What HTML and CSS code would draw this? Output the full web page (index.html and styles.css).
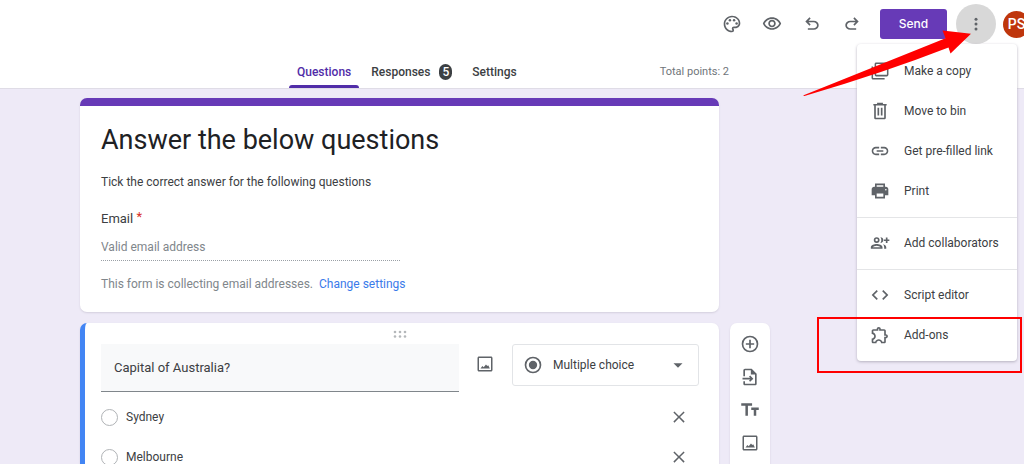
FILE: index.html
```
<!DOCTYPE html>
<html lang="en">
<head>
<meta charset="utf-8">
<title>Answer the below questions</title>
<link rel="stylesheet" href="styles.css">
</head>
<body>
<header class="header">
  <div class="actions">
    <button class="icon-btn" aria-label="Customise theme"><svg class="icon" viewBox="0 0 24 24"><path d="M12 22C6.49 22 2 17.51 2 12S6.49 2 12 2s10 4.04 10 9c0 3.31-2.69 6-6 6h-1.77c-.28 0-.5.22-.5.5 0 .12.05.23.13.33.41.47.64 1.06.64 1.67A2.5 2.5 0 0 1 12 22zm0-18c-4.41 0-8 3.59-8 8s3.59 8 8 8c.28 0 .5-.22.5-.5a.54.54 0 0 0-.14-.35c-.41-.46-.63-1.05-.63-1.65a2.5 2.5 0 0 1 2.5-2.5H16c2.21 0 4-1.79 4-4 0-3.86-3.59-7-8-7z"/><circle cx="6.5" cy="11.5" r="1.5"/><circle cx="9.5" cy="7.5" r="1.5"/><circle cx="14.5" cy="7.5" r="1.5"/><circle cx="17.5" cy="11.5" r="1.5"/></svg></button>
    <button class="icon-btn" aria-label="Preview"><svg class="icon" viewBox="0 0 24 24"><path d="M12 6c3.79 0 7.17 2.13 8.82 5.5C19.17 14.87 15.79 17 12 17s-7.17-2.13-8.82-5.5C4.83 8.13 8.21 6 12 6m0-2C7 4 2.73 7.11 1 11.5 2.73 15.89 7 19 12 19s9.27-3.11 11-7.5C21.27 7.11 17 4 12 4zm0 5a2.5 2.5 0 0 1 0 5 2.5 2.5 0 0 1 0-5m0-2c-2.48 0-4.5 2.02-4.5 4.5S9.52 16 12 16s4.5-2.02 4.5-4.5S14.48 7 12 7z"/></svg></button>
    <button class="icon-btn" aria-label="Undo"><svg class="icon" viewBox="0 0 24 24"><path d="M7 19v-2h7.1c1.05 0 1.96-.33 2.74-1 .77-.67 1.16-1.5 1.16-2.5s-.39-1.83-1.16-2.5c-.78-.67-1.69-1-2.74-1H7.8l2.6 2.6L9 14 4 9l5-5 1.4 1.4L7.8 8h6.3c1.62 0 3.01.52 4.18 1.57C19.43 10.63 20 11.93 20 13.5s-.57 2.88-1.72 3.93C17.11 18.48 15.72 19 14.1 19z"/></svg></button>
    <button class="icon-btn" aria-label="Redo"><svg class="icon" viewBox="0 0 24 24"><path d="M17 19v-2H9.9c-1.05 0-1.96-.33-2.74-1C6.39 15.33 6 14.5 6 13.5s.39-1.83 1.16-2.5c.78-.67 1.69-1 2.74-1h6.3l-2.6 2.6L15 14l5-5-5-5-1.4 1.4L16.2 8H9.9c-1.62 0-3.01.52-4.18 1.57C4.57 10.63 4 11.93 4 13.5s.57 2.88 1.72 3.93C6.89 18.48 8.28 19 9.9 19z"/></svg></button>
    <button class="send">Send</button>
    <button class="icon-btn more" aria-label="More" aria-expanded="true"><svg class="icon" viewBox="0 0 24 24"><circle cx="12" cy="5.5" r="2"/><circle cx="12" cy="12" r="2"/><circle cx="12" cy="18.5" r="2"/></svg></button>
    <button class="avatar" aria-label="Account">PS</button>
  </div>
  <nav class="tabs">
    <a class="tab active" href="#questions">Questions</a>
    <a class="tab" href="#responses">Responses <span class="count">5</span></a>
    <a class="tab" href="#settings">Settings</a>
    <span class="points">Total points: 2</span>
  </nav>
</header>

<main class="board">
  <section class="card intro">
    <h1 class="title">Answer the below questions</h1>
    <p class="description">Tick the correct answer for the following questions</p>
    <label class="email-label" for="email">Email <span class="required">*</span></label>
    <input class="email" id="email" type="email" placeholder="Valid email address" disabled>
    <p class="notice">This form is collecting email addresses. <a class="link" href="#settings">Change settings</a></p>
  </section>

  <section class="card question">
    <svg class="grip" viewBox="0 0 14 8"><circle cx="2" cy="2" r="1.3"/><circle cx="7" cy="2" r="1.3"/><circle cx="12" cy="2" r="1.3"/><circle cx="2" cy="6.5" r="1.3"/><circle cx="7" cy="6.5" r="1.3"/><circle cx="12" cy="6.5" r="1.3"/></svg>
    <div class="question-head">
      <input class="question-text" type="text" value="Capital of Australia?" aria-label="Question">
      <button class="icon-btn add-image" aria-label="Add image"><svg class="icon" viewBox="0 0 24 24"><path d="M20 4v16H4V4h16m0-2H4c-1.100 0-2 .9-2 2v16c0 1.100.9 2 2 2h16c1.100 0 2-.9 2-2V4c0-1.100-.9-2-2-2z"/><path d="M6 18l2.500-3.500 1.800 1.800 3-3.800 1.800 2.300 1.200-1 2.200 4.200z"/></svg></button>
      <div class="type">
        <svg class="icon type-icon" viewBox="0 0 24 24"><path d="M12 7a5 5 0 1 0 0 10 5 5 0 0 0 0-10zm0-5a10 10 0 1 0 0 20 10 10 0 0 0 0-20zm0 18a8 8 0 1 1 0-16 8 8 0 0 1 0 16z"/></svg>
        <select class="type-select" aria-label="Question type"><option>Multiple choice</option></select>
        <svg class="icon type-arrow" viewBox="0 0 24 24"><path d="M6 9.500l6 6 6-6z"/></svg>
      </div>
    </div>
    <div class="option">
      <label class="option-label"><input class="radio" type="radio" name="answer">Sydney</label>
      <button class="icon-btn remove" aria-label="Remove Sydney"><svg class="icon" viewBox="0 0 24 24"><path d="M19.500 5.910L18.090 4.500 12 10.590 5.910 4.500 4.500 5.910 10.590 12 4.500 18.090l1.410 1.410L12 13.410l6.090 6.090 1.410-1.410L13.410 12z"/></svg></button>
    </div>
    <div class="option">
      <label class="option-label"><input class="radio" type="radio" name="answer">Melbourne</label>
      <button class="icon-btn remove" aria-label="Remove Melbourne"><svg class="icon" viewBox="0 0 24 24"><path d="M19.500 5.910L18.090 4.500 12 10.590 5.910 4.500 4.500 5.910 10.590 12 4.500 18.090l1.410 1.410L12 13.410l6.090 6.090 1.410-1.410L13.410 12z"/></svg></button>
    </div>
  </section>

  <aside class="toolbar">
    <button class="tool" aria-label="Add question"><svg class="icon" viewBox="0 0 24 24"><path d="M13 7h-2v4H7v2h4v4h2v-4h4v-2h-4V7zm-1-5a10 10 0 1 0 0 20 10 10 0 0 0 0-20zm0 18a8 8 0 1 1 0-16 8 8 0 0 1 0 16z"/></svg></button>
    <button class="tool" aria-label="Import questions"><svg class="icon" viewBox="0 0 24 24"><path d="M14 2H6c-1.100 0-2 .9-2 2v7h2V4h7v5h5v11H6v-3H4v3c0 1.100.9 2 2 2h12c1.100 0 2-.9 2-2V8z"/><path d="M12.200 10.200L10.800 11.600 12.200 13H3v2h9.200l-1.400 1.400 1.400 1.400L16 14z"/></svg></button>
    <button class="tool" aria-label="Add title"><svg class="icon" viewBox="0 0 24 24"><path d="M1.500 4v3h5v12h3V7h5V4zM22.500 9h-9v3h3v7h3v-7h3z"/></svg></button>
    <button class="tool" aria-label="Add image block"><svg class="icon" viewBox="0 0 24 24"><path d="M20 4v16H4V4h16m0-2H4c-1.100 0-2 .9-2 2v16c0 1.100.9 2 2 2h16c1.100 0 2-.9 2-2V4c0-1.100-.9-2-2-2z"/><path d="M6 18l2.500-3.500 1.800 1.800 3-3.800 1.800 2.300 1.200-1 2.200 4.200z"/></svg></button>
  </aside>
</main>

<div class="menu" role="menu">
  <div class="group">
    <button class="item" role="menuitem"><svg class="icon" viewBox="-1 -1 26 26"><path d="M3 6H1v15c0 1.100.9 2 2 2h15v-2H3V6zM21 1H7c-1.100 0-2 .9-2 2v14c0 1.100.9 2 2 2h14c1.100 0 2-.9 2-2V3c0-1.100-.9-2-2-2zm0 16H7V3h14v14z"/></svg>Make a copy</button>
    <button class="item" role="menuitem"><svg class="icon" viewBox="0 0 24 24"><path d="M15.500 3.500V2.200h-7v1.300H4v2h1V20c0 1.100.9 2 2 2h10c1.100 0 2-.9 2-2V5.500h1v-2zM17 20H7V5.500h10zM9 8h2v9.500H9zm4 0h2v9.500h-2z"/></svg>Move to bin</button>
    <button class="item" role="menuitem"><svg class="icon" viewBox="0 0 24 24"><path d="M3.900 12c0-1.710 1.390-3.100 3.100-3.100h4V7H7c-2.760 0-5 2.240-5 5s2.240 5 5 5h4v-1.900H7c-1.710 0-3.100-1.390-3.100-3.100zM8 13h8v-2H8v2zm9-6h-4v1.900h4c1.710 0 3.100 1.390 3.100 3.100s-1.390 3.100-3.100 3.100h-4V17h4c2.760 0 5-2.240 5-5s-2.240-5-5-5z"/></svg>Get pre-filled link</button>
    <button class="item" role="menuitem"><svg class="icon" viewBox="0 0 24 24"><path fill-rule="evenodd" d="M18 7V3H6v4H5c-1.660 0-3 1.340-3 3v7h4v4h12v-4h4v-7c0-1.660-1.340-3-3-3zM8 5h8v2H8zm8 14H8v-4h8zm3-7.500a1 1 0 1 1 0-2 1 1 0 0 1 0 2z"/></svg>Print</button>
  </div>
  <div class="group">
    <button class="item" role="menuitem"><svg class="icon" viewBox="0 0 24 24"><path fill-rule="evenodd" d="M8 12a3.500 3.500 0 1 0 0-7 3.500 3.500 0 0 0 0 7zm0-5a1.500 1.500 0 1 1 0 3 1.500 1.500 0 0 1 0-3zM8 13.200c-2.700 0-7 1.300-7 3.900V19h14v-1.900c0-2.600-4.300-3.900-7-3.900zM3.300 17c.8-.9 2.700-1.800 4.700-1.800s3.900.9 4.700 1.800z"/><path d="M12.500 5c2 0 3.600 1.500 3.600 3.500S14.500 12 12.500 12c.7-.9 1.100-2.100 1.100-3.500s-.4-2.600-1.100-3.500zM15.500 13.500c2.200.5 4 1.700 4 3.600V19h-2.500v-1.900c0-1.400-.5-2.600-1.500-3.600zM19 5.500h2v2.200h2.200v2H21V12h-2V9.700h-2.200v-2H19z"/></svg>Add collaborators</button>
  </div>
  <div class="group">
    <button class="item" role="menuitem"><svg class="icon" viewBox="0 0 24 24"><path d="M9.400 16.600L4.800 12l4.600-4.600L8 6l-6 6 6 6 1.400-1.400zm5.200 0l4.600-4.600-4.600-4.600L16 6l6 6-6 6-1.400-1.400z"/></svg>Script editor</button>
    <button class="item" role="menuitem"><svg class="icon" viewBox="0 0 24 24"><path d="M10.500 4.500c.28 0 .5.22.5.5v2h6v6h2c.28 0 .5.22.5.5s-.22.5-.5.5h-2v6h-2.120c-.68-1.750-2.390-3-4.380-3s-3.700 1.250-4.380 3H4v-2.120c1.750-.68 3-2.390 3-4.380 0-1.990-1.240-3.700-2.990-4.380L4 7h6V5c0-.28.220-.5.5-.5m0-2C9.120 2.500 8 3.620 8 5H4c-1.100 0-1.990.9-1.990 2v3.800h.29c1.490 0 2.700 1.210 2.700 2.700s-1.210 2.700-2.700 2.700H2V20c0 1.100.9 2 2 2h3.800v-.3c0-1.490 1.210-2.700 2.700-2.700s2.700 1.210 2.700 2.700v.3H17c1.100 0 2-.9 2-2v-4c1.380 0 2.500-1.120 2.500-2.500S20.380 11 19 11V7c0-1.100-.9-2-2-2h-4c0-1.380-1.120-2.500-2.500-2.500z"/></svg>Add-ons</button>
  </div>
</div>

<svg class="arrow" viewBox="0 0 168 66"><path d="M0 65.500L142.500 8.300 139.500.5 168 3.700 147.500 23.500 145.500 17.500Q80 43 1.500 66z"/></svg>
<div class="highlight"></div>
</body>
</html>
```

FILE: styles.css
```
* { box-sizing: border-box; }

body {
  margin: 0;
  height: 100vh;
  overflow: hidden;
  position: relative;
  background: #eeeaf7;
  color: #3c4043;
  font: 12px/16px Roboto, sans-serif;
}

button, input, select { font: inherit; color: inherit; }
button { padding: 0; border: 0; background: none; }
a { text-decoration: none; }
h1, p { margin: 0; }

.icon { display: block; flex: none; width: 20px; height: 20px; fill: #5f6368; }

.header { overflow: hidden; background: #fff; border-bottom: 1px solid #dfdce6; }

.actions { display: flex; align-items: center; justify-content: flex-end; height: 48px; }
.icon-btn { display: flex; align-items: center; justify-content: center; width: 40px; height: 40px; border-radius: 50%; }
.send {
  width: 67px;
  height: 30px;
  margin: 0 9px 0 8px;
  border-radius: 3px;
  background: #673ab7;
  color: #fff;
  font: 500 12px/16px Inter, sans-serif;
}
.more { background: #d8d8d8; }
.more .icon { width: 18px; height: 18px; }
.avatar {
  flex: none;
  width: 27px;
  height: 27px;
  margin: 0 -6px 0 7px;
  border-radius: 50%;
  background: #bf360c;
  color: #fff;
  font-size: 14px;
  font-weight: 500;
}

.tabs { display: flex; padding: 8px 0 0 289px; font: 500 12px/16px Roboto, sans-serif; }
.tab {
  display: flex;
  align-items: center;
  height: 32px;
  margin-right: 4px;
  padding: 0 8px;
  color: #3c4043;
}
.tab.active { position: relative; color: #512da8; }
.tab.active::after {
  content: "";
  position: absolute;
  inset: auto 0 0;
  height: 3px;
  border-radius: 3px 3px 0 0;
  background: #512da8;
}
.count {
  margin-left: 9px;
  padding: 0 3px;
  border-radius: 7px;
  background: #3c4043;
  color: #fff;
}
.points { align-self: center; margin-left: 131px; color: #70757a; font: 11px/16px Roboto, sans-serif; }

.board {
  display: grid;
  grid-template-columns: 1fr 40px;
  gap: 11px;
  padding: 9px 254px 0 80px;
}
.card { border-radius: 7px; background: #fff; box-shadow: 0 1px 2px #d3cfdd; }

.intro { grid-column: 1; padding: 16px 21px 20px; border-top: 8px solid #673ab7; }
.title { color: #202124; font-size: 27px; font-weight: 400; line-height: 36px; }
.description { margin-top: 11px; padding: 5px 0; }
.email-label { display: block; margin-top: 11px; padding: 5px 0; font-size: 13px; }
.required { color: #d93025; vertical-align: 2px; line-height: 12px; }
.email {
  display: block;
  width: 50%;
  height: 25px;
  margin-top: 4px;
  padding: 0 0 3px;
  border: 0;
  border-bottom: 1px dotted #9aa0a6;
  border-radius: 0;
  background: none;
}
.email::placeholder { color: #80868b; opacity: 1; }
.notice { margin-top: 15px; color: #80868b; }
.link { margin-left: 3px; color: #3b7bea; }

.question { grid-column: 1; padding: 7px 20px 0 16px; border-left: 5px solid #4285f4; }
.grip { display: block; width: 14px; height: 8px; margin: 0 auto; fill: #b4b7ba; }
.question-head { display: flex; align-items: flex-start; margin-top: 6px; }
.question-text {
  flex: 1;
  min-width: 0;
  height: 48px;
  padding: 0 13px;
  border: 0;
  border-bottom: 1px solid #80868b;
  border-radius: 0;
  background: #f8f9fa;
  font-size: 13px;
}
.add-image { margin: 0 7px 0 6px; }
.add-image .icon, .tool:last-child .icon { width: 18px; height: 18px; }
.type { display: flex; align-items: center; position: relative; width: 187px; height: 42px; }
.type-icon, .type-arrow { position: absolute; left: 11px; pointer-events: none; }
.type-arrow { left: auto; right: 12px; width: 18px; height: 18px; }
.type-select {
  appearance: none;
  width: 100%;
  height: 100%;
  padding: 0 40px;
  border: 1px solid #e2e4e7;
  border-radius: 3px;
  background: #fff;
}
.option { display: flex; align-items: center; justify-content: space-between; height: 40px; }
.question-head + .option { margin-top: 5px; }
.option-label { display: flex; align-items: center; gap: 8px; }
.radio {
  appearance: none;
  width: 17px;
  height: 17px;
  margin: 0;
  border: 1px solid #b0b3b6;
  border-radius: 50%;
}
.remove .icon { width: 18px; height: 18px; }

.toolbar { grid-column: 2; padding-top: 4px; border-radius: 7px; background: #fff; box-shadow: 0 1px 2px #d3cfdd; }
.tool { display: flex; align-items: center; justify-content: center; width: 100%; height: 33px; }

.menu {
  position: absolute;
  top: 44px;
  right: 7px;
  width: 160px;
  border-radius: 4px;
  background: #fff;
  box-shadow: 0 1px 3px #b5b1bf;
}
.group { padding: 7px 0 6px; }
.group + .group { border-top: 1px solid #e4e5e7; padding-top: 5px; }
.item { display: flex; align-items: center; gap: 14px; width: 100%; height: 40px; padding-left: 13px; }

.arrow { position: absolute; top: 30px; right: 53px; width: 168px; height: 66px; fill: #f00; }
.highlight { position: absolute; top: 317px; right: 2px; width: 205px; height: 56px; border: 2px solid #f00; }
```
